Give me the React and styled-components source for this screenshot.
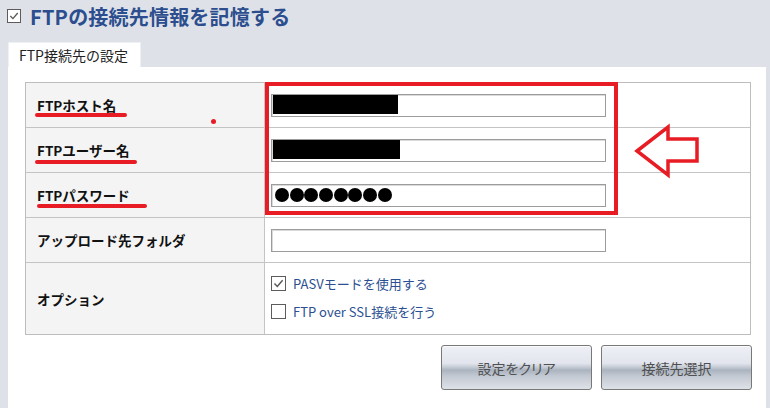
import React from "react";
import styled, { createGlobalStyle } from "styled-components";

const GlobalStyle = createGlobalStyle`
  html, body { margin: 0; padding: 0; }
  body {
    background: #dee2e8;
    font-family: "Noto Sans CJK JP", "Noto Sans", sans-serif;
    color: #222;
  }
`;

const Page = styled.div`
  position: relative;
  width: 770px;
  height: 408px;
  overflow: hidden;
  background: #dee2e8;
  display: flex;
  flex-direction: column;
`;

const Header = styled.div`
  height: 42px;
  display: flex;
  align-items: flex-start;
  padding: 9px 0 0 7px;
  box-sizing: border-box;
  gap: 9px;
`;

const Title = styled.h1`
  margin: -6px 0 0 0;
  font-size: 20px;
  line-height: 28px;
  font-weight: 700;
  color: #2c4e8e;
  letter-spacing: 0.2px;
`;

const Box = styled.span`
  flex: none;
  width: ${(p) => p.$size}px;
  height: ${(p) => p.$size}px;
  box-sizing: border-box;
  border: 1px solid #5c5c5c;
  background: #fff;
  display: inline-flex;
  align-items: center;
  justify-content: center;
  svg { display: block; }
`;

const Check = ({ size = 15, checked }) => (
  <Box $size={size}>
    {checked && (
      <svg width={size - 4} height={size - 4} viewBox="0 0 11 11">
        <polyline points="1.5,5.5 4.3,8.4 9.6,2.2" fill="none" stroke="#555" strokeWidth="1.4" />
      </svg>
    )}
  </Box>
);

const TabBar = styled.div`
  display: flex;
  padding-left: 8px;
  height: 25px;
`;

const Tab = styled.div`
  width: 133px;
  box-sizing: border-box;
  background: #fff;
  border: 1px solid #eef0f3;
  border-bottom: none;
  font-size: 14px;
  line-height: 24px;
  padding-left: 10px;
  color: #222;
  white-space: nowrap;
`;

const Panel = styled.div`
  flex: 1;
  margin: 0 4px 0 8px;
  background: #fff;
  padding: 15px 15px 0 17px;
  display: flex;
  flex-direction: column;
`;

const Table = styled.div`
  border: 1px solid #bdbdbd;
  display: flex;
  flex-direction: column;
`;

const Row = styled.div`
  display: grid;
  grid-template-columns: 239px 1fr;
  height: ${(p) => p.$h}px;
  & + & { border-top: 1px solid #c4c4c4; }
`;

const LabelCell = styled.div`
  background: #f4f4f4;
  border-right: 1px solid #c4c4c4;
  display: flex;
  align-items: center;
  padding-left: 11px;
  font-size: 13.5px;
  font-weight: 700;
  color: #111;
  white-space: nowrap;
`;

const ValueCell = styled.div`
  display: flex;
  align-items: center;
  padding-left: 6px;
`;

const Input = styled.div`
  width: 335px;
  height: 23px;
  box-sizing: border-box;
  border: 1px solid #9c9c9c;
  box-shadow: inset 1px 1px 0 #dadada;
  background: #fff;
  display: flex;
  align-items: center;
  padding: 0 1px;
`;

const Redact = styled.div`
  width: ${(p) => p.$w}px;
  height: 19px;
  margin-bottom: 2px;
  background: #000;
`;

const Dots = styled.div`
  display: flex;
  gap: 0.7px;
  padding-left: 2px;
`;

const Dot = styled.span`
  width: 14px;
  height: 14px;
  border-radius: 50%;
  background: #000;
`;

const Options = styled.div`
  display: flex;
  flex-direction: column;
  gap: 13px;
  align-self: flex-start;
  padding-top: 13px;
`;

const Option = styled.label`
  display: flex;
  align-items: center;
  gap: 7px;
  font-size: 13px;
  line-height: 15px;
  color: #2b4f92;
  white-space: nowrap;
`;

const ButtonBar = styled.div`
  display: flex;
  justify-content: flex-end;
  gap: 9px;
  margin: 10px -1px 0 0;
`;

const Button = styled.button`
  width: 151px;
  height: 45px;
  border: 1px solid #787878;
  border-radius: 3px;
  background: linear-gradient(
    to bottom,
    #eef0f6 0%,
    #e2e5ed 40%,
    #c2c9d3 50%,
    #aab3bf 56%,
    #c3c9d2 70%,
    #dde1e8 100%
  );
  box-shadow: inset 0 1px 0 #fafbfd;
  font-family: "Noto Sans CJK JP", sans-serif;
  font-size: 14px;
  font-feature-settings: "palt";
  color: #505050;
  padding: 0;
`;

/* annotations drawn over the screenshot */
const RedBox = styled.div`
  position: absolute;
  left: 265px;
  top: 82px;
  width: 353px;
  height: 133px;
  box-sizing: border-box;
  border: 4px solid #e81c25;
  pointer-events: none;
`;

const Underline = styled.div`
  position: absolute;
  left: ${(p) => p.$x}px;
  top: ${(p) => p.$y}px;
  width: ${(p) => p.$w}px;
  height: 4px;
  border-radius: 2px;
  background: #e81c25;
`;

const RedDot = styled.div`
  position: absolute;
  left: 211px;
  top: 119px;
  width: 5px;
  height: 5px;
  border-radius: 50%;
  background: #e81c25;
`;

const ArrowWrap = styled.svg`
  position: absolute;
  left: 630px;
  top: 120px;
`;

const fields = [
  { label: "FTPホスト名", content: <Redact $w={125} /> },
  { label: "FTPユーザー名", content: <Redact $w={127} /> },
  {
    label: "FTPパスワード",
    content: (
      <Dots>
        {Array.from({ length: 8 }).map((_, i) => (
          <Dot key={i} />
        ))}
      </Dots>
    ),
  },
  { label: "アップロード先フォルダ", content: null },
];

export default function App() {
  return (
    <>
      <GlobalStyle />
      <Page>
        <Header>
          <Check size={14} checked />
          <Title>FTPの接続先情報を記憶する</Title>
        </Header>
        <TabBar>
          <Tab>FTP接続先の設定</Tab>
        </TabBar>
        <Panel>
          <Table>
            {fields.map((f) => (
              <Row key={f.label} $h={44}>
                <LabelCell>{f.label}</LabelCell>
                <ValueCell>
                  <Input>{f.content}</Input>
                </ValueCell>
              </Row>
            ))}
            <Row $h={71}>
              <LabelCell>オプション</LabelCell>
              <ValueCell>
                <Options>
                  <Option>
                    <Check size={15} checked />
                    PASVモードを使用する
                  </Option>
                  <Option>
                    <Check size={15} />
                    FTP over SSL接続を行う
                  </Option>
                </Options>
              </ValueCell>
            </Row>
          </Table>
          <ButtonBar>
            <Button>設定をクリア</Button>
            <Button>接続先選択</Button>
          </ButtonBar>
        </Panel>

        <RedBox />
        <Underline $x={35} $y={113} $w={92} />
        <Underline $x={35} $y={160} $w={102} />
        <Underline $x={37} $y={204} $w={110} />
        <RedDot />
        <ArrowWrap width="75" height="62" viewBox="0 0 75 62">
          <polygon
            points="7,31 38,7 38,19 67,19 67,41 38,41 38,55"
            fill="none"
            stroke="#e81c25"
            strokeWidth="3.5"
            strokeLinejoin="miter"
          />
        </ArrowWrap>
      </Page>
    </>
  );
}
